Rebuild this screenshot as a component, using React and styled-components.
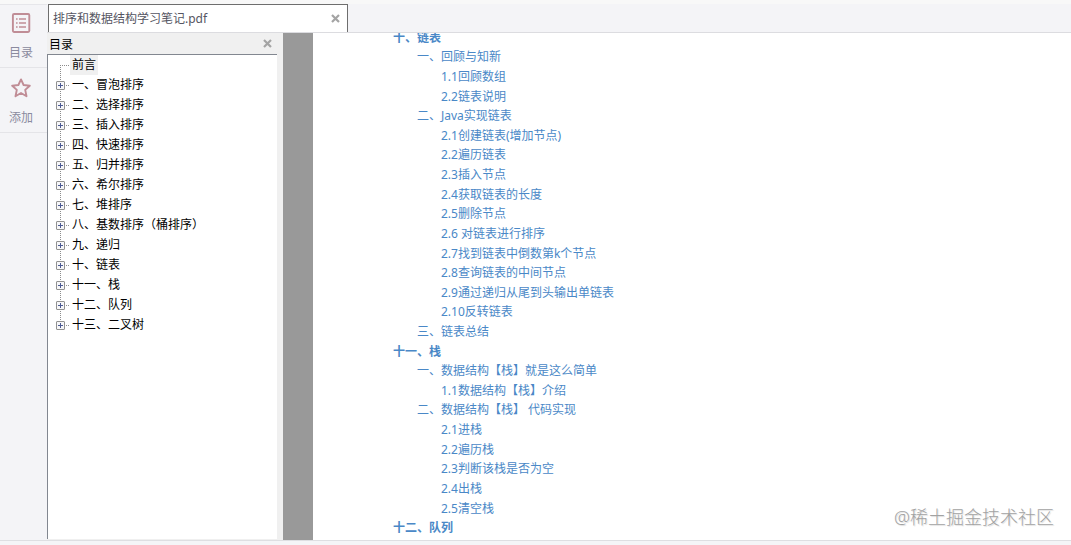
import React, { useState } from 'react'
import styled, { createGlobalStyle } from 'styled-components'

const chapters = [
  "前言",
  "一、冒泡排序",
  "二、选择排序",
  "三、插入排序",
  "四、快速排序",
  "五、归并排序",
  "六、希尔排序",
  "七、堆排序",
  "八、基数排序（桶排序）",
  "九、递归",
  "十、链表",
  "十一、栈",
  "十二、队列",
  "十三、二叉树",
];

const outline = [
  { level: 0, text: "十、链表" },
  { level: 1, text: "一、回顾与知新" },
  { level: 2, text: "1.1回顾数组" },
  { level: 2, text: "2.2链表说明" },
  { level: 1, text: "二、Java实现链表" },
  { level: 2, text: "2.1创建链表(增加节点)" },
  { level: 2, text: "2.2遍历链表" },
  { level: 2, text: "2.3插入节点" },
  { level: 2, text: "2.4获取链表的长度" },
  { level: 2, text: "2.5删除节点" },
  { level: 2, text: "2.6 对链表进行排序" },
  { level: 2, text: "2.7找到链表中倒数第k个节点" },
  { level: 2, text: "2.8查询链表的中间节点" },
  { level: 2, text: "2.9通过递归从尾到头输出单链表" },
  { level: 2, text: "2.10反转链表" },
  { level: 1, text: "三、链表总结" },
  { level: 0, text: "十一、栈" },
  { level: 1, text: "一、数据结构【栈】就是这么简单" },
  { level: 2, text: "1.1数据结构【栈】介绍" },
  { level: 1, text: "二、数据结构【栈】 代码实现" },
  { level: 2, text: "2.1进栈" },
  { level: 2, text: "2.2遍历栈" },
  { level: 2, text: "2.3判断该栈是否为空" },
  { level: 2, text: "2.4出栈" },
  { level: 2, text: "2.5清空栈" },
  { level: 0, text: "十二、队列" },
];

const CloseIcon = () => (
  <svg width="9" height="9" viewBox="0 0 9 9" aria-hidden="true">
    <path d="M1 1L8 8M8 1L1 8" stroke="#a4a4a4" strokeWidth="2.2" fill="none" />
  </svg>
)

const ListIcon = () => (
  <svg width="20" height="20" viewBox="0 0 20 20" fill="none" stroke="#c08d96" aria-hidden="true">
    <rect x="1.9" y="1" width="16.4" height="18" rx="1.2" strokeWidth="1.9" />
    <path d="M8 6H15M8 10H15M8 14H15" strokeWidth="1.6" />
    <path d="M5 6H6.6M5 10H6.6M5 14H6.6" strokeWidth="1.6" />
  </svg>
)

const StarIcon = () => (
  <svg width="20" height="20" viewBox="0 0 20 20" fill="none" stroke="#c08d96" aria-hidden="true">
    <path
      d="M10 1.4L12.6 7L18.8 7.7L14.2 11.9L15.5 18.2L10 15L4.5 18.2L5.8 11.9L1.2 7.7L7.4 7Z"
      strokeWidth="1.9"
      strokeLinejoin="round"
    />
  </svg>
)

const App = () => {
  const [selected, setSelected] = useState(0);

  return (
    <>
      <GlobalStyle />
      <Window>
        <Rail>
          <RailButton type="button"><ListIcon /><span>目录</span></RailButton>
          <RailButton type="button"><StarIcon /><span>添加</span></RailButton>
        </Rail>
        <Main>
          <TabBar>
            <Tab>
              <TabTitle>排序和数据结构学习笔记.pdf</TabTitle>
              <CloseButton type="button" aria-label="关闭"><CloseIcon /></CloseButton>
            </Tab>
          </TabBar>
          <Workspace>
            <Sidebar>
              <SidebarHeader>
                <span>目录</span>
                <CloseButton type="button" aria-label="关闭"><CloseIcon /></CloseButton>
              </SidebarHeader>
              <Tree>
                {chapters.map((name, i) => (
                  <TreeRow key={name}>
                    <Branch $first={i === 0} $last={i === chapters.length - 1}>
                      {i > 0 && (
                        <Expander type="button" aria-label={name}>
                          <svg width="5" height="5" viewBox="0 0 5 5">
                            <path d="M0 2.5H5M2.5 0V5" stroke="#4b5a92" />
                          </svg>
                        </Expander>
                      )}
                    </Branch>
                    <TreeLabel type="button" $selected={i === selected} onClick={() => setSelected(i)}>
                      {name}
                    </TreeLabel>
                  </TreeRow>
                ))}
              </Tree>
            </Sidebar>
            <Gutter />
            <Page>
              <Outline>
                {outline.map((item, i) => (
                  <OutlineItem key={i} $level={item.level}>
                    <a href={`#s${i}`}>{item.text}</a>
                  </OutlineItem>
                ))}
              </Outline>
              <Watermark>@稀土掘金技术社区</Watermark>
            </Page>
          </Workspace>
        </Main>
        <StatusBar />
      </Window>
    </>
  )
}

const GlobalStyle = createGlobalStyle`
  * {
    box-sizing: border-box;
  }
  body {
    margin: 0;
    background: #f4f4f7;
    font-family: "Noto Sans", "Noto Sans CJK SC", sans-serif;
    font-size: 12px;
  }
  button {
    margin: 0;
    padding: 0;
    border: none;
    background: none;
    font: inherit;
    color: inherit;
    cursor: pointer;
  }
  ul {
    margin: 0;
    padding: 0;
    list-style: none;
  }
`;

const Window = styled.div`
  display: grid;
  grid-template-columns: 47px 1fr;
  grid-template-rows: 1fr 5px;
  height: 100vh;
  overflow: hidden;
  border-top: 4px solid #f8f8f8;
`;

const Rail = styled.nav`
  display: flex;
  flex-direction: column;
  border-top: 1px solid #e6e6ea;
`;

const RailButton = styled.button`
  display: flex;
  flex-direction: column;
  align-items: center;
  gap: 11px;
  height: 63px;
  padding: 8px 5px 0 0;
  border-bottom: 1px solid #e4e4e8;
  color: #8a8a9e;
  line-height: 18px;

  &:not(:first-child) {
    height: 65px;
    padding-top: 10px;
  }
  svg {
    flex: none;
  }
`;

const Main = styled.div`
  display: flex;
  flex-direction: column;
  min-width: 0;
  min-height: 0;
`;

const TabBar = styled.div`
  display: flex;
  flex: none;
  height: 29px;
  padding-left: 1px;
  border-bottom: 1px solid #dcdce0;
`;

const Tab = styled.div`
  display: flex;
  align-items: center;
  justify-content: space-between;
  width: 300px;
  padding: 0 7px 0 4px;
  background: #fff;
  border: 1px solid #6e6e6e;
  border-bottom: none;
`;

const TabTitle = styled.span`
  color: #555562;
  line-height: 20px;
  white-space: nowrap;
`;

const CloseButton = styled.button`
  display: flex;
  svg {
    display: block;
  }
`;

const Workspace = styled.div`
  display: flex;
  flex: 1;
  min-height: 0;
`;

const Sidebar = styled.aside`
  display: flex;
  flex: none;
  flex-direction: column;
  width: 236px;
  padding: 0 6px 1px 0;
  background: #f0f0f0;
`;

const SidebarHeader = styled.div`
  display: flex;
  align-items: center;
  justify-content: space-between;
  flex: none;
  height: 21px;
  padding: 0 5px 0 2px;
  color: #000;
`;

const Tree = styled.ul`
  flex: 1;
  min-height: 0;
  overflow: hidden;
  background: #fff;
  border-top: 1px solid #828790;
  border-left: 1px solid #828790;
`;

const TreeRow = styled.li`
  display: flex;
  height: 20px;
  padding-left: 8px;
`;

/* dotted connector lines, the expander box sits over their crossing */
const Branch = styled.span`
  position: relative;
  display: flex;
  align-items: center;
  width: 14px;

  &::before {
    content: "";
    position: absolute;
    left: 4px;
    top: ${(p) => (p.$first ? "10px" : "0")};
    bottom: ${(p) => (p.$last ? "10px" : "0")};
    width: 1px;
    background: repeating-linear-gradient(#8c8c8c 0 1px, transparent 1px 2px);
  }
  &::after {
    content: "";
    position: absolute;
    left: 4px;
    right: 1px;
    top: 10px;
    height: 1px;
    background: repeating-linear-gradient(90deg, #8c8c8c 0 1px, transparent 1px 2px);
  }
`;

const Expander = styled.button`
  position: relative;
  z-index: 1;
  display: flex;
  align-items: center;
  justify-content: center;
  width: 9px;
  height: 9px;
  margin-top: 1px;
  border: 1px solid #919191;
  border-radius: 1px;
  background: #f6f6f8;

  svg {
    flex: none;
  }
`;

const TreeLabel = styled.button`
  padding: 0 2px;
  background: ${(p) => (p.$selected ? "#f0f0f0" : "transparent")};
  color: #000;
  line-height: 20px;
  white-space: nowrap;
`;

const Gutter = styled.div`
  flex: none;
  width: 30px;
  background: #999;
`;

const Page = styled.main`
  position: relative;
  display: flex;
  flex: 1;
  min-width: 0;
  overflow: hidden;
  background: #fff;
`;

/* scrolled a little, so the first row is cut by the tab bar */
const Outline = styled.ul`
  display: grid;
  grid-auto-rows: 1fr;
  flex: 1;
  margin: -5px 0 2px;
  padding-left: 80px;
`;

const OutlineItem = styled.li`
  display: flex;
  align-items: center;
  min-height: 0;
  padding-left: ${(p) => p.$level * 24}px;
  font-weight: ${(p) => (p.$level === 0 ? 700 : 400)};
  line-height: 18px;

  a {
    color: #4a88c7;
    text-decoration: none;
    white-space: nowrap;
  }
`;

const Watermark = styled.div`
  position: absolute;
  right: 17px;
  bottom: 10px;
  color: #a2a2a2;
  font-size: 18px;
  font-weight: 300;
  line-height: 26px;
  text-shadow: 1px 1px 1px #ddd;
`;

const StatusBar = styled.footer`
  grid-column: 1 / -1;
  border-top: 1px solid #dedee2;
  background: #f4f4f7;
`;

export default App;
